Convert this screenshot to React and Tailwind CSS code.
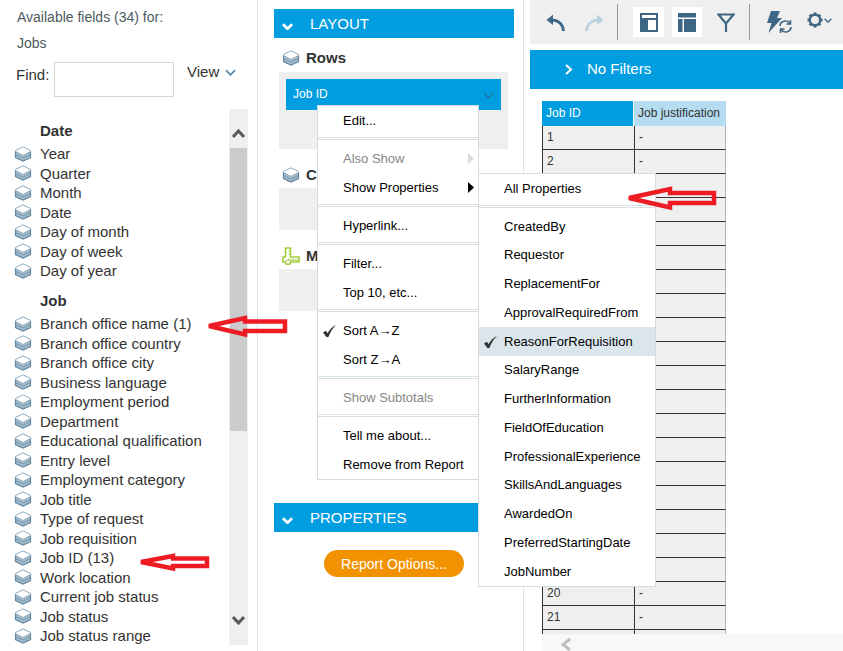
import { Fragment } from 'react'

const dateFields = ['Year', 'Quarter', 'Month', 'Date', 'Day of month', 'Day of week', 'Day of year']

const jobFields = [
  'Branch office name (1)',
  'Branch office country',
  'Branch office city',
  'Business language',
  'Employment period',
  'Department',
  'Educational qualification',
  'Entry level',
  'Employment category',
  'Job title',
  'Type of request',
  'Job requisition',
  'Job ID (13)',
  'Work location',
  'Current job status',
  'Job status',
  'Job status range',
]

const properties = [
  'CreatedBy',
  'Requestor',
  'ReplacementFor',
  'ApprovalRequiredFrom',
  'ReasonForRequisition',
  'SalaryRange',
  'FurtherInformation',
  'FieldOfEducation',
  'ProfessionalExperience',
  'SkillsAndLanguages',
  'AwardedOn',
  'PreferredStartingDate',
  'JobNumber',
]

const menuGroups = [
  [{ label: 'Edit...' }],
  [{ label: 'Also Show', disabled: true, arrow: true }, { label: 'Show Properties', arrow: true, submenu: true }],
  [{ label: 'Hyperlink...' }],
  [{ label: 'Filter...' }, { label: 'Top 10, etc...' }],
  [{ label: 'Sort A→Z', checked: true }, { label: 'Sort Z→A' }],
  [{ label: 'Show Subtotals', disabled: true }],
  [{ label: 'Tell me about...' }, { label: 'Remove from Report' }],
]

const rows = Array.from({ length: 22 }, (_, i) => i + 1)

function LayersIcon() {
  return (
    <svg className="h-4 w-[18px] shrink-0" viewBox="0 0 18 16" fill="none" aria-hidden="true">
      <path d="M1.500 4.500v7l7.500 3.500 7.500-3.500v-7L9 9z" fill="#a5bccb" />
      <path d="M1.500 8.500L9 12l7.500-3.500" stroke="#6f93ac" strokeWidth="0.9" />
      <path d="M1.500 5v6.500L9 15l7.500-3.500V5" stroke="#6288a4" strokeWidth="1.200" />
      <path d="M9 0.800l7.500 3.700v1L9 9.500 1.500 5.500v-1z" fill="#fff" stroke="#8fabbd" strokeWidth="1" />
    </svg>
  )
}

function RulerIcon() {
  return (
    <svg className="h-[18px] w-[18px] shrink-0" viewBox="0 0 18 18" fill="none" stroke="#a2cc3a" aria-hidden="true">
      <path d="M3.500 1h5v9H17v5H8.500v1l-1 1.200h-3l-1-1.200v-1H1v-5h2.500z" fill="#fff" strokeWidth="1.600" />
      <path d="M6.500 4h2M6.500 7h2M4 13.200h12" strokeWidth="1" />
      <path d="M6.500 11.500v2M9 11.500v2M11.500 11.500v2M14 11.500v2" strokeWidth="0.8" />
    </svg>
  )
}

function Chevron({ d = 'M1 1l5 5 5-5', box = '0 0 12 7', weight = 2, className }) {
  return (
    <svg className={className} viewBox={box} fill="none" stroke="currentColor" strokeWidth={weight} aria-hidden="true">
      <path d={d} />
    </svg>
  )
}

function Check() {
  return (
    <svg className="absolute top-2 left-1 h-[14px] w-[15px]" viewBox="0 0 15 14" fill="#333" aria-hidden="true">
      <path d="M1 8.500l3-1.800 1.500 2.600C7.500 5.500 10 3 14 0.800 10.800 4.500 8.300 8 6.400 13H4.300z" />
    </svg>
  )
}

function RedArrow({ className, box, d }) {
  return (
    <svg className={className} viewBox={box} fill="none" stroke="#ed1c24" strokeWidth="4.500" strokeMiterlimit="2" aria-hidden="true">
      <path d={d} />
    </svg>
  )
}

function FieldList({ title, fields }) {
  return (
    <section>
      <h2 className="pl-10 text-[15px] leading-5 font-bold">{title}</h2>
      <ul className="mt-[3px]">
        {fields.map((field) => (
          <li key={field} className="flex items-center gap-2 pl-[14px] text-[15px] leading-[19px] odd:h-[19px] even:h-5">
            <LayersIcon />
            <span className="whitespace-nowrap">{field}</span>
          </li>
        ))}
      </ul>
    </section>
  )
}

function FieldsPanel() {
  return (
    <aside className="flex w-[258px] shrink-0 flex-col border-r border-[#dbe6ed]">
      <div className="pt-2 pl-[17px] text-sm text-[#4d5a5e]">
        <p className="leading-[18px]">Available fields (34) for:</p>
        <p className="mt-2 leading-[18px]">Jobs</p>
      </div>
      <div className="mt-[10px] flex items-start pl-4 text-[15px]">
        <label htmlFor="find" className="mt-[2px] w-[38px]">
          Find:
        </label>
        <input id="find" type="text" className="h-[35px] w-[120px] border border-[#d5d5d5] bg-white" />
        <button type="button" className="ml-[13px] flex items-center gap-[6px] leading-5">
          View
          <Chevron className="h-[7px] w-[11px] text-[#5d88a8]" />
        </button>
      </div>
      <div className="mt-3 mb-[6px] flex min-h-0 flex-1 justify-between">
        <div className="flex flex-col gap-[11px] pt-3">
          <FieldList title="Date" fields={dateFields} />
          <FieldList title="Job" fields={jobFields} />
        </div>
        <div className="mr-[9px] flex w-[19px] flex-col items-center bg-[#efefef] text-[#5a5a5a]">
          <Chevron className="mt-5 h-[9px] w-[13px]" d="M1 8l5.500-6L12 8" box="0 0 13 9" weight={3} />
          <div className="mt-[10px] h-[283px] w-[17px] bg-[#cbcbcb]" />
          <Chevron className="mt-auto mb-5 h-[9px] w-[13px]" d="M1 1l5.500 6L12 1" box="0 0 13 9" weight={3} />
        </div>
      </div>
    </aside>
  )
}

function Separator() {
  return <li role="separator" className="mt-[2px] mb-1 h-[3px] border-t border-b border-t-[#d6e3ea] border-b-[#dcdfe1]" />
}

function MenuItem({ label, checked, disabled, arrow, highlighted, className = 'h-[29px]', children }) {
  return (
    <li className={`relative ${className} ${highlighted ? 'bg-[#dbe6ec]' : ''}`}>
      <button
        type="button"
        disabled={disabled}
        className="flex h-full w-full items-center justify-between pr-1 pl-[25px] whitespace-nowrap text-black disabled:text-[#858585]"
      >
        {checked && <Check />}
        {label}
        {arrow && (
          <svg
            className={`h-[11px] w-[6px] ${disabled ? 'text-[#dadada]' : 'text-black'}`}
            viewBox="0 0 6 11"
            fill="currentColor"
            aria-hidden="true"
          >
            <path d="M0 0l6 5.500L0 11z" />
          </svg>
        )}
      </button>
      {children}
    </li>
  )
}

function PropertiesMenu() {
  return (
    <ul className="absolute top-0 left-40 w-[178px] border border-[#d8dbdd] bg-white">
      <MenuItem label="All Properties" />
      <Separator />
      {properties.map((name) => (
        <MenuItem
          key={name}
          label={name}
          checked={name === 'ReasonForRequisition'}
          highlighted={name === 'ReasonForRequisition'}
          className="h-[29px] nth-[4n]:h-7"
        />
      ))}
    </ul>
  )
}

function ContextMenu() {
  return (
    <ul className="absolute top-[26px] left-[31px] z-10 w-[162px] border border-[#d8dbdd] bg-white text-[13px]">
      {menuGroups.map((group, i) => (
        <Fragment key={group[0].label}>
          {i > 0 && <Separator />}
          {group.map(({ submenu, ...item }) => (
            <MenuItem key={item.label} {...item}>
              {submenu && <PropertiesMenu />}
            </MenuItem>
          ))}
        </Fragment>
      ))}
    </ul>
  )
}

function PanelHeader({ title }) {
  return (
    <h2>
      <button type="button" className="flex h-[29px] w-full items-center bg-[#009de0] pt-[2px] pl-2 text-[15px] text-white">
        <Chevron className="mt-1 mr-[17px] h-[7px] w-[11px]" weight={3} />
        {title}
      </button>
    </h2>
  )
}

function ZoneTitle({ icon, title }) {
  return (
    <h3 className="flex h-[26px] items-center gap-[6px] pl-[3px] text-[15px] font-bold">
      {icon}
      {title}
    </h3>
  )
}

function LayoutPanel() {
  return (
    <section className="w-[266px] shrink-0 border-r border-[#dbe6ed] pt-[9px] pr-[9px] pl-4">
      <PanelHeader title="LAYOUT" />
      <div className="mt-[7px] mr-[6px] ml-[5px]">
        <ZoneTitle icon={<LayersIcon />} title="Rows" />
        <div className="mt-px h-[77px] bg-[#efefef] p-[7px]">
          <div className="relative">
            <button
              type="button"
              className="flex h-[31px] w-full items-center justify-between bg-[#009de0] px-[7px] pb-[2px] text-xs text-white"
            >
              Job ID
              <Chevron className="mt-1 h-[7px] w-[11px] text-[#1979ad]" />
            </button>
            <ContextMenu />
          </div>
        </div>
        <div className="mt-[13px]">
          <ZoneTitle icon={<LayersIcon />} title="Columns" />
        </div>
        <div className="h-[42px] bg-[#efefef]" />
        <div className="mt-[13px]">
          <ZoneTitle icon={<RulerIcon />} title="Measures" />
        </div>
        <div className="h-[42px] bg-[#efefef]" />
      </div>
      <div className="mt-48">
        <PanelHeader title="PROPERTIES" />
      </div>
      <button type="button" className="mx-auto mt-[18px] block h-[27px] rounded-full bg-[#f39200] px-[17px] text-sm text-white">
        Report Options...
      </button>
    </section>
  )
}

function Toolbar() {
  return (
    <div className="flex h-11 shrink-0 items-center bg-[#efefef] pl-4 text-[#3e6785]">
      <button type="button" aria-label="Undo">
        <svg className="mt-1 h-5 w-5" viewBox="0 0 20 20" fill="none" stroke="currentColor" strokeWidth="2.800" aria-hidden="true">
          <path d="M5 6c7 0 12 4 12.500 11" />
          <path d="M7 0.500v10.500L0.500 6z" fill="currentColor" stroke="none" />
        </svg>
      </button>
      <button type="button" aria-label="Redo" className="ml-[18px] text-[#b9d0df]">
        <svg className="mt-1 h-5 w-5" viewBox="0 0 20 20" fill="none" stroke="currentColor" strokeWidth="2.600" aria-hidden="true">
          <path d="M15 6C8 6 3 10 2.500 17" />
          <path d="M13 0.500v10.500l6.500-5z" fill="currentColor" stroke="none" />
        </svg>
      </button>
      <div className="ml-[13px] h-9 w-px bg-[#979797]" />
      <button type="button" aria-label="Layout view" className="ml-[15px] flex h-[30px] w-[31px] items-center justify-center bg-white">
        <svg className="h-[19px] w-[18px]" viewBox="0 0 18 19" aria-hidden="true">
          <path d="M0 0h18v19H0z" fill="currentColor" />
          <path d="M2 2h14v3H2zM8 7h8v10H8z" fill="#fff" />
        </svg>
      </button>
      <button type="button" aria-label="Table view" className="ml-2 flex h-[30px] w-[30px] items-center justify-center bg-white">
        <svg className="h-[19px] w-[18px]" viewBox="0 0 18 19" fill="currentColor" aria-hidden="true">
          <path d="M0 0h18v4.500H0zM0 6h4.500v13H0zM6 6h12v13H6z" />
        </svg>
      </button>
      <button type="button" aria-label="Filter" className="ml-[15px]">
        <svg className="h-[19px] w-[18px]" viewBox="0 0 18 19" fill="none" stroke="currentColor" strokeWidth="2.200" aria-hidden="true">
          <path d="M1.500 1.500h15L9.500 10h-1zM9 9v10" />
        </svg>
      </button>
      <div className="ml-[14px] h-9 w-px bg-[#979797]" />
      <button type="button" aria-label="Run report" className="ml-[17px]">
        <svg className="h-6 w-[25px]" viewBox="0 0 25 24" fill="none" stroke="currentColor" aria-hidden="true">
          <path d="M4 1h9l-3 7h5L1.500 23l3-10H0z" fill="currentColor" stroke="none" />
          <path d="M13 16c0-5 7-7 10-2.500M24 17c0 5-7 7-10 2.500M23.500 10v4H19.500M13.500 23v-4h4" strokeWidth="1.600" />
        </svg>
      </button>
      <button type="button" aria-label="Settings" className="mb-1 ml-[15px] flex items-center gap-[1px]">
        <svg className="h-4 w-4" viewBox="0 0 16 16" fill="none" stroke="currentColor" aria-hidden="true">
          <circle cx="8" cy="8" r="5.200" strokeWidth="2.400" />
          <path
            d="M8 0.500v2M8 13.500v2M0.500 8h2M13.500 8h2M2.700 2.700l1.300 1.300M12 12l1.300 1.300M13.300 2.700L12 4M4 12l-1.300 1.300"
            strokeWidth="3"
          />
        </svg>
        <Chevron className="h-[5px] w-[8px]" />
      </button>
    </div>
  )
}

function ReportTable() {
  return (
    <table className="w-[184px] table-fixed border-separate border-spacing-0 text-left text-xs leading-[15px] text-[#333]">
      <thead>
        <tr className="h-[25px]">
          <th className="w-[92px] border-r border-white bg-[#009de0] px-1 font-normal text-white">Job ID</th>
          <th className="bg-[#b5dcf0] px-1 font-normal whitespace-nowrap">Job justification</th>
        </tr>
      </thead>
      <tbody>
        {rows.map((id) => (
          <tr key={id} className="h-6 bg-[#efefef]">
            <td className="border-b border-l border-[#333] px-1">{id}</td>
            <td className="border-r border-b border-l border-[#333] border-r-[#b0b0b0] px-1">-</td>
          </tr>
        ))}
      </tbody>
    </table>
  )
}

function ReportPanel() {
  return (
    <main className="ml-[6px] flex min-w-0 flex-1 flex-col">
      <Toolbar />
      <button
        type="button"
        className="mt-[6px] flex h-[39px] shrink-0 items-center gap-[14px] bg-[#009de0] pl-[35px] text-[15px] text-white"
      >
        <Chevron className="h-[11px] w-2" d="M1 1l5 4.500-5 4.500" box="0 0 8 11" />
        No Filters
      </button>
      <div className="mt-3 ml-3 min-h-0 flex-1 overflow-hidden">
        <ReportTable />
      </div>
      <div className="ml-3 flex h-[17px] shrink-0 items-end bg-[#f8f8f8] pl-[19px] text-[#bdbdbd]">
        <Chevron className="h-[13px] w-[10px]" d="M9 1L2 6.500 9 12" box="0 0 10 13" weight={3} />
      </div>
    </main>
  )
}

export default function App() {
  return (
    <div className="relative flex h-screen overflow-hidden bg-white font-['Liberation_Sans',Arial,sans-serif] text-[#333]">
      <FieldsPanel />
      <LayoutPanel />
      <ReportPanel />

      {/* callouts drawn over the page */}
      <RedArrow
        className="absolute top-[314px] left-[205px] z-20 h-6 w-[84px]"
        box="0 0 84 24"
        d="M4 12L40 4v3.500h40v9.500H40v3.500z"
      />
      <RedArrow
        className="absolute top-[552px] left-[137px] z-20 h-5 w-[74px]"
        box="0 0 74 20"
        d="M4 10l32-6v2.500h34v7.500H36v2.500z"
      />
      <RedArrow
        className="absolute top-[185px] left-[625px] z-20 h-[26px] w-[93px]"
        box="0 0 93 26"
        d="M4 13l41-9v4h44v10H45v4.500z"
      />
    </div>
  )
}
